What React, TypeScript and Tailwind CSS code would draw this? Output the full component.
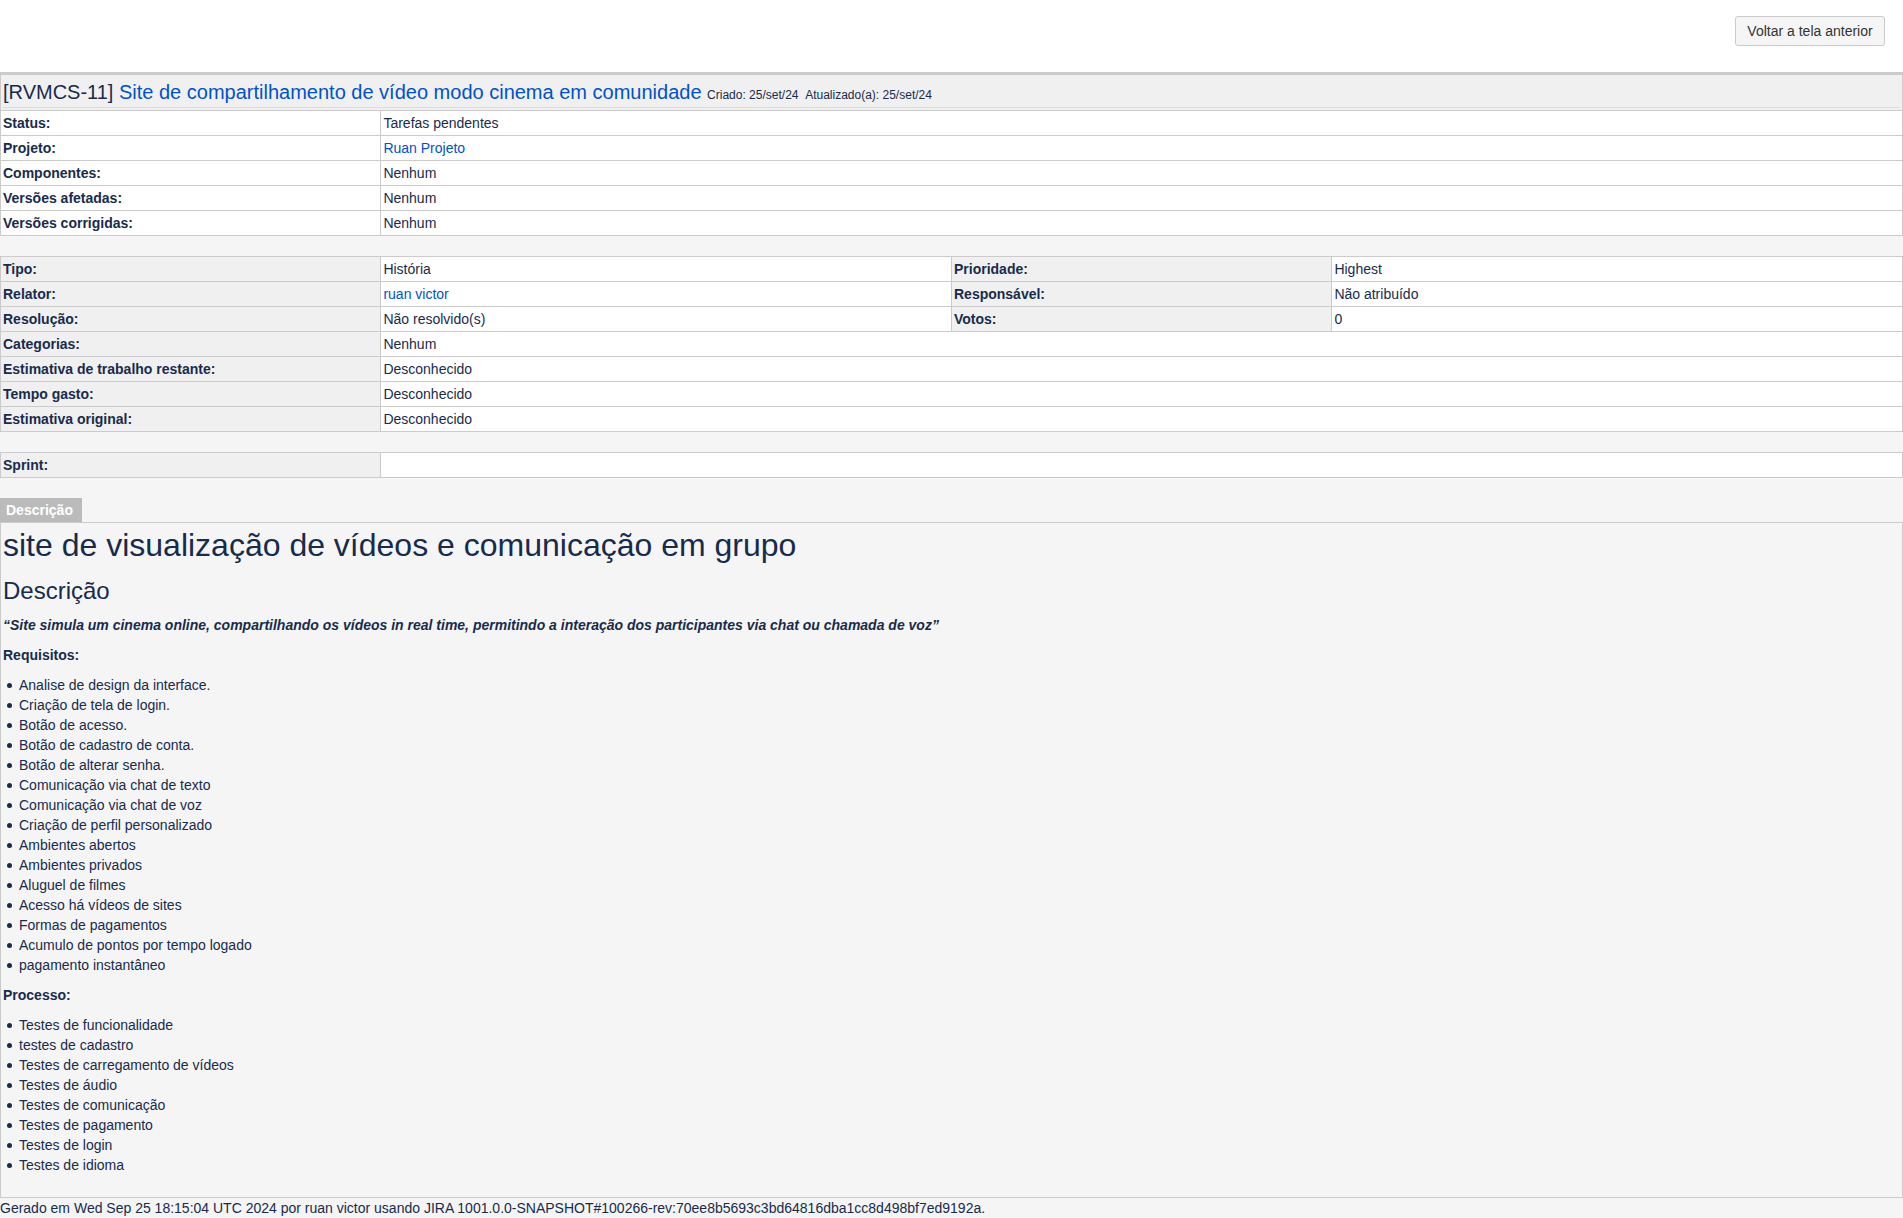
import type { ReactNode } from "react";

const summary: [string, ReactNode][] = [
  ["Status:", "Tarefas pendentes"],
  ["Projeto:", <Link key="p">Ruan Projeto</Link>],
  ["Componentes:", "Nenhum"],
  ["Versões afetadas:", "Nenhum"],
  ["Versões corrigidas:", "Nenhum"],
];

const pairs: [string, ReactNode, string, ReactNode][] = [
  ["Tipo:", "História", "Prioridade:", "Highest"],
  ["Relator:", <Link key="r">ruan victor</Link>, "Responsável:", "Não atribuído"],
  ["Resolução:", "Não resolvido(s)", "Votos:", "0"],
];

const details: [string, string][] = [
  ["Categorias:", "Nenhum"],
  ["Estimativa de trabalho restante:", "Desconhecido"],
  ["Tempo gasto:", "Desconhecido"],
  ["Estimativa original:", "Desconhecido"],
];

const requirements = [
  "Analise de design da interface.",
  "Criação de tela de login.",
  "Botão de acesso.",
  "Botão de cadastro de conta.",
  "Botão de alterar senha.",
  "Comunicação via chat de texto",
  "Comunicação via chat de voz",
  "Criação de perfil personalizado",
  "Ambientes abertos",
  "Ambientes privados",
  "Aluguel de filmes",
  "Acesso há vídeos de sites",
  "Formas de pagamentos",
  "Acumulo de pontos por tempo logado",
  "pagamento instantâneo",
];

const process = [
  "Testes de funcionalidade",
  "testes de cadastro",
  "Testes de carregamento de vídeos",
  "Testes de áudio",
  "Testes de comunicação",
  "Testes de pagamento",
  "Testes de login",
  "Testes de idioma",
];

function Link({ children }: { children: ReactNode }) {
  return (
    <a href="#" className="text-[#0052cc] hover:underline">
      {children}
    </a>
  );
}

function Label({ children, plain }: { children: ReactNode; plain?: boolean }) {
  return (
    <th
      scope="row"
      className={`border border-[#cbcbcb] p-0.5 text-left align-top font-bold ${plain ? "bg-white" : "bg-[#f0f0f0]"}`}
    >
      {children}
    </th>
  );
}

function Value({ children, span }: { children?: ReactNode; span?: number }) {
  return (
    <td colSpan={span} className="h-6 border border-[#cbcbcb] bg-white p-0.5 align-top">
      {children}
    </td>
  );
}

function Bullets({ items }: { items: string[] }) {
  return (
    <ul className="pl-1">
      {items.map((item) => (
        <li
          key={item}
          className="flex items-center gap-[7px] before:size-[5px] before:rounded-full before:bg-[#172b4d] before:content-['']"
        >
          {item}
        </li>
      ))}
    </ul>
  );
}

export default function App() {
  return (
    <div className="min-h-screen bg-[#f5f5f5] font-['Liberation_Sans',Arial,sans-serif] text-sm leading-5 text-[#172b4d]">
      <header className="flex justify-end bg-white px-[18px] pt-4 pb-[26px]">
        <button
          type="button"
          className="min-w-[150px] rounded-[3px] border border-[#cbcbcb] bg-[#f5f5f5] px-2.5 py-1 text-[#333333]"
        >
          Voltar a tela anterior
        </button>
      </header>

      <main className="flex flex-col gap-5">
        <div className="border-t-2 border-[#cbcbcb]">
          <table className="w-full table-fixed border-collapse">
            <colgroup>
              <col className="w-[20%]" />
              <col />
            </colgroup>
            <tbody>
              <tr>
                <td colSpan={2} className="border border-[#cbcbcb] bg-[#f0f0f0] p-0.5">
                  <h3 className="border-b border-[#dddddd] text-xl leading-[30px]">
                    [RVMCS-11] <Link>Site de compartilhamento de vídeo modo cinema em comunidade</Link>{" "}
                    <span className="text-xs">Criado: 25/set/24 &nbsp;Atualizado(a): 25/set/24</span>
                  </h3>
                </td>
              </tr>
              {summary.map(([label, value]) => (
                <tr key={label}>
                  <Label plain>{label}</Label>
                  <Value>{value}</Value>
                </tr>
              ))}
            </tbody>
          </table>
        </div>

        <table className="w-full table-fixed border-collapse">
          <colgroup>
            <col className="w-[20%]" />
            <col className="w-[30%]" />
            <col className="w-[20%]" />
            <col className="w-[30%]" />
          </colgroup>
          <tbody>
            {pairs.map(([label, value, label2, value2]) => (
              <tr key={label}>
                <Label>{label}</Label>
                <Value>{value}</Value>
                <Label>{label2}</Label>
                <Value>{value2}</Value>
              </tr>
            ))}
            {details.map(([label, value]) => (
              <tr key={label}>
                <Label>{label}</Label>
                <Value span={3}>{value}</Value>
              </tr>
            ))}
          </tbody>
        </table>

        <table className="w-full table-fixed border-collapse">
          <colgroup>
            <col className="w-[20%]" />
            <col />
          </colgroup>
          <tbody>
            <tr>
              <Label>Sprint:</Label>
              <Value />
            </tr>
          </tbody>
        </table>

        <section>
          <h2 className="w-fit min-w-[82px] bg-[#bbbbbb] px-1.5 py-0.5 font-bold text-white">Descrição</h2>
          <div className="flex flex-col gap-2.5 border border-[#cbcbcb] px-0.5 pt-0.5 pb-[22px]">
            <h1 className="text-[32px] leading-10">site de visualização de vídeos e comunicação em grupo</h1>
            <h2 className="pt-0.5 text-2xl leading-7">Descrição</h2>
            <p className="font-bold italic">
              “Site simula um cinema online, compartilhando os vídeos in real time, permitindo a interação dos
              participantes via chat ou chamada de voz”
            </p>
            <p className="font-bold">Requisitos:</p>
            <Bullets items={requirements} />
            <p className="font-bold">Processo:</p>
            <Bullets items={process} />
          </div>
        </section>
      </main>

      <footer>
        Gerado em Wed Sep 25 18:15:04 UTC 2024 por ruan victor usando JIRA
        1001.0.0-SNAPSHOT#100266-rev:70ee8b5693c3bd64816dba1cc8d498bf7ed9192a.
      </footer>
    </div>
  );
}
